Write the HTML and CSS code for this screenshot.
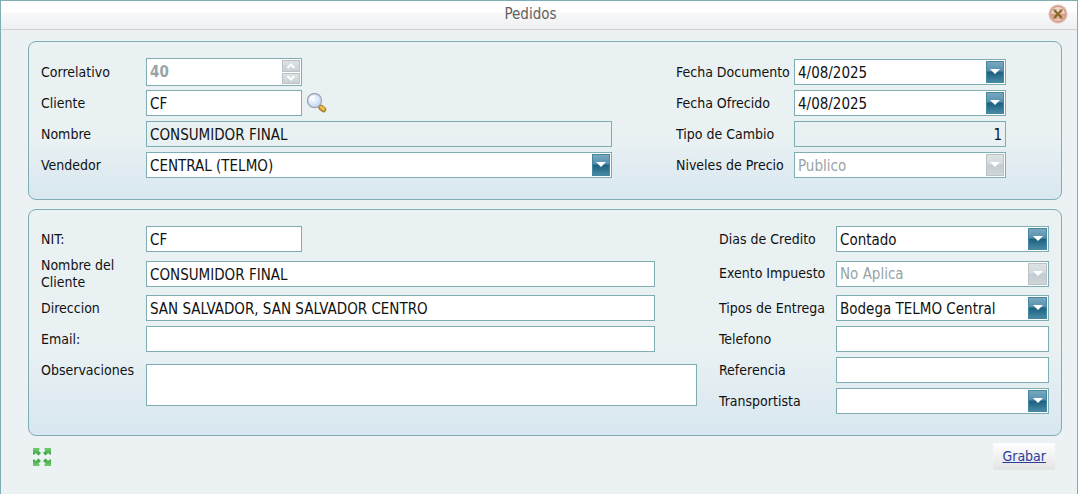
FILE: index.html
```html
<!doctype html>
<html lang="es">
<head>
	<meta charset="utf-8">
	<meta name="viewport" content="width=device-width, initial-scale=1">
	<title>Pedidos</title>
	<link rel="stylesheet" href="styles.css">
</head>
<body>
	<form class="popup" autocomplete="off">
		<header class="title">
			<h1>Pedidos</h1>
			<button type="button" class="close" aria-label="Cerrar">
				<svg width="20" height="20" viewBox="0 0 20 20">
					<defs>
						<linearGradient id="red" x1="0" y1="0" x2="0" y2="1">
							<stop offset="0" stop-color="#f3ddd4"/><stop offset=".48" stop-color="#ecccbf"/>
							<stop offset=".52" stop-color="#d6967e"/><stop offset="1" stop-color="#f7d3c0"/>
						</linearGradient>
					</defs>
					<circle cx="10" cy="10" r="9.500" fill="#dfb8ac"/>
					<circle cx="10" cy="10" r="7.500" fill="url(#red)" stroke="#d29482"/>
					<path d="M6.500 6.500l7 7M13.500 6.500l-7 7" stroke="#86692a" stroke-width="2.200"/>
					<path d="M5 6h3.500M11.500 6H15M5 14h3.500M11.500 14H15" stroke="#86692a" stroke-width="1.200"/>
				</svg>
			</button>
		</header>

		<main class="content">
			<section class="panel order">
				<div class="fields">
					<label for="num">Correlativo</label>
					<div class="box spin short">
						<input id="num" type="text" value="40" disabled>
						<div class="steps">
							<button type="button" disabled aria-label="Subir"><svg width="10" height="6" viewBox="0 0 10 6"><path d="M1.500 5 5 1.500 8.500 5"/></svg></button>
							<button type="button" disabled aria-label="Bajar"><svg width="10" height="6" viewBox="0 0 10 6"><path d="M1.500 1 5 4.500 8.500 1"/></svg></button>
						</div>
					</div>
					<label for="cli">Cliente</label>
					<div class="lookup">
						<input id="cli" class="box short" type="text" value="CF">
						<button type="button" class="ico" aria-label="Buscar">
							<svg width="20" height="20" viewBox="0 0 20 20">
								<defs>
									<radialGradient id="lens" cx=".4" cy=".4"><stop offset="0" stop-color="#fff"/><stop offset="1" stop-color="#cbdcf8"/></radialGradient>
								</defs>
								<path d="M12 12l2.500 2.500" stroke="#777" stroke-width="3"/>
								<path d="M14 14.500l2.500 2" stroke="#a8842f" stroke-width="5.500" stroke-linecap="round"/>
								<path d="M14.300 14.300l2.200 1.700" stroke="#eec049" stroke-width="3" stroke-linecap="round"/>
								<circle cx="7.500" cy="7.500" r="7" fill="url(#lens)" stroke="#a0a6b2" stroke-width="1.300"/>
								<path d="M3 7.500A4.500 4.500 0 0 1 7.500 3" fill="none" stroke="#fff" stroke-width="1.500"/>
							</svg>
						</button>
					</div>
					<label for="nom">Nombre</label>
					<input id="nom" class="box" type="text" value="CONSUMIDOR FINAL" readonly>
					<label for="ven">Vendedor</label>
					<div class="box combo">
						<select id="ven"><option>CENTRAL (TELMO)</option></select>
						<span class="arrow"></span>
					</div>
				</div>
				<div class="fields side">
					<label for="fdoc">Fecha Documento</label>
					<div class="box combo">
						<input id="fdoc" type="text" value="4/08/2025">
						<button type="button" class="arrow" aria-label="Calendario"></button>
					</div>
					<label for="fofr">Fecha Ofrecido</label>
					<div class="box combo">
						<input id="fofr" type="text" value="4/08/2025">
						<button type="button" class="arrow" aria-label="Calendario"></button>
					</div>
					<label for="cam">Tipo de Cambio</label>
					<input id="cam" class="box num" type="text" value="1" readonly>
					<label for="niv">Niveles de Precio</label>
					<div class="box combo">
						<select id="niv" disabled><option>Publico</option></select>
						<span class="arrow"></span>
					</div>
				</div>
			</section>

			<section class="panel client">
				<div class="fields">
					<label for="nit">NIT:</label>
					<input id="nit" class="box short" type="text" value="CF">
					<label for="ncli">Nombre del Cliente</label>
					<input id="ncli" class="box long" type="text" value="CONSUMIDOR FINAL">
					<label for="dir">Direccion</label>
					<input id="dir" class="box long" type="text" value="SAN SALVADOR, SAN SALVADOR CENTRO">
					<label for="mail">Email:</label>
					<input id="mail" class="box long" type="text">
					<label for="obs">Observaciones</label>
					<textarea id="obs" class="box notes"></textarea>
				</div>
				<div class="fields side">
					<label for="dias">Dias de Credito</label>
					<div class="box combo">
						<select id="dias"><option>Contado</option></select>
						<span class="arrow"></span>
					</div>
					<label for="exe">Exento Impuesto</label>
					<div class="box combo">
						<select id="exe" disabled><option>No Aplica</option></select>
						<span class="arrow"></span>
					</div>
					<label for="ent">Tipos de Entrega</label>
					<div class="box combo">
						<select id="ent"><option>Bodega TELMO Central</option></select>
						<span class="arrow"></span>
					</div>
					<label for="tel">Telefono</label>
					<input id="tel" class="box" type="text">
					<label for="ref">Referencia</label>
					<input id="ref" class="box" type="text">
					<label for="tra">Transportista</label>
					<div class="box combo">
						<select id="tra"><option></option></select>
						<span class="arrow"></span>
					</div>
				</div>
			</section>

			<footer class="actions">
				<button type="button" class="ico" aria-label="Expandir">
					<svg width="18" height="18" viewBox="0 0 18 18">
						<defs>
							<linearGradient id="green" x1="0" y1="0" x2="0" y2="1"><stop offset="0" stop-color="#6fce70"/><stop offset="1" stop-color="#35a23b"/></linearGradient>
							<path id="arr" d="M0 0h6.500v1.500L5.500 2.500 8 5 5.500 7.500 2.800 5 1.500 6.500H0z"/>
						</defs>
						<g fill="url(#green)">
							<use href="#arr"/>
							<use href="#arr" transform="matrix(-1 0 0 1 18 0)"/>
							<use href="#arr" transform="matrix(1 0 0 -1 0 18)"/>
							<use href="#arr" transform="rotate(180 9 9)"/>
						</g>
					</svg>
				</button>
				<a href="#" class="save">Grabar</a>
			</footer>
		</main>
	</form>
</body>
</html>
```
FILE: styles.css
```css
*{box-sizing:border-box}
body{margin:0;background:#ecf1f4;color:#111;font:14px/17px Tahoma,"DejaVu Sans Condensed",sans-serif}
button,input,select,textarea{margin:0;border:0;padding:0;font:inherit;color:inherit}
svg{display:block}

.popup{min-height:100vh;border:1px solid #7fadb4;border-bottom:0}
.title{display:flex;align-items:center;height:29px;padding:0 9px 2px 12px;border-bottom:1px solid #d0d2d2;background:linear-gradient(#fff 40%,#f8f8f9 42%,#eff0f2)}
.title h1{flex:1;margin:0;color:#5f6060;font-size:15px;font-weight:normal;text-align:center}
.close,.ico{background:none;cursor:pointer}

.content{padding:11px 15px 0 27px}
.panel{display:flex;margin-bottom:9px;border:1px solid #7fadb4;border-radius:8px;background:linear-gradient(#e9f1f3 62%,#d8e7f0)}
.order{gap:64px;padding:17px 55px 21px 12px}
.client{gap:22px;padding:16px 12px 21px}

.fields{display:grid;flex:1;grid-template-columns:105px 1fr;grid-auto-rows:26px;row-gap:5px;align-items:center}
.fields.side{flex:none;grid-template-columns:118px 212px}
.client .fields{grid-template-rows:26px 33px}
.client .fields.side{grid-template-columns:117px 213px}

.box{width:100%;height:26px;border:1px solid #7fadb4;padding:2px 3px 0;background:#fff;font-size:15px}
.box[readonly]{background:transparent}
.short{width:156px}
.long{width:calc(100% - 42px)}
.num{text-align:right}
.notes{align-self:start;height:42px;margin-top:7px;resize:none}

.combo{display:flex;position:relative;padding:1px}
.combo select,.combo input{flex:1;min-width:0;height:22px;padding:2px 20px 0 2px;background:none;appearance:none}
.combo .arrow{position:absolute;top:1px;right:1px;width:19px;height:22px;border:1px solid #4586a1;background:linear-gradient(#79a8be,#5690ae 45%,#1c6080 50%,#4689a2)}
.combo .arrow::after{content:"";position:absolute;left:4px;top:7px;border:5px solid transparent;border-top-color:#fff;border-bottom:0}
.combo span.arrow{pointer-events:none}
.order .arrow{width:18px}
.order .arrow::after{left:3px}
.combo select:disabled{color:#98a4a6;opacity:1}
.combo select:disabled+.arrow{border-color:#bdc3c5;background:linear-gradient(#dde2e5,#d3d9dd 45%,#c3ccd1 50%,#cfd6da)}

.spin{display:flex;height:28px;padding:1px}
.spin input{flex:1;min-width:0;padding-left:2px;background:none;color:#98a4a6;font-weight:bold}
.steps{display:grid;gap:1px;width:18px}
.steps button{display:grid;place-items:center;border:1px solid #bdc3c5;background:linear-gradient(#dce1e4,#c9d1d6)}
.steps path{fill:none;stroke:#fff;stroke-width:2}
.lookup{display:flex;align-items:center;gap:5px}

.actions{display:flex;align-items:center;justify-content:space-between;margin-top:-2px;padding:0 7px 0 5px}
.save{padding:5px 9px;background:linear-gradient(#fff,#e3e3e4);color:#283c9c}
```
